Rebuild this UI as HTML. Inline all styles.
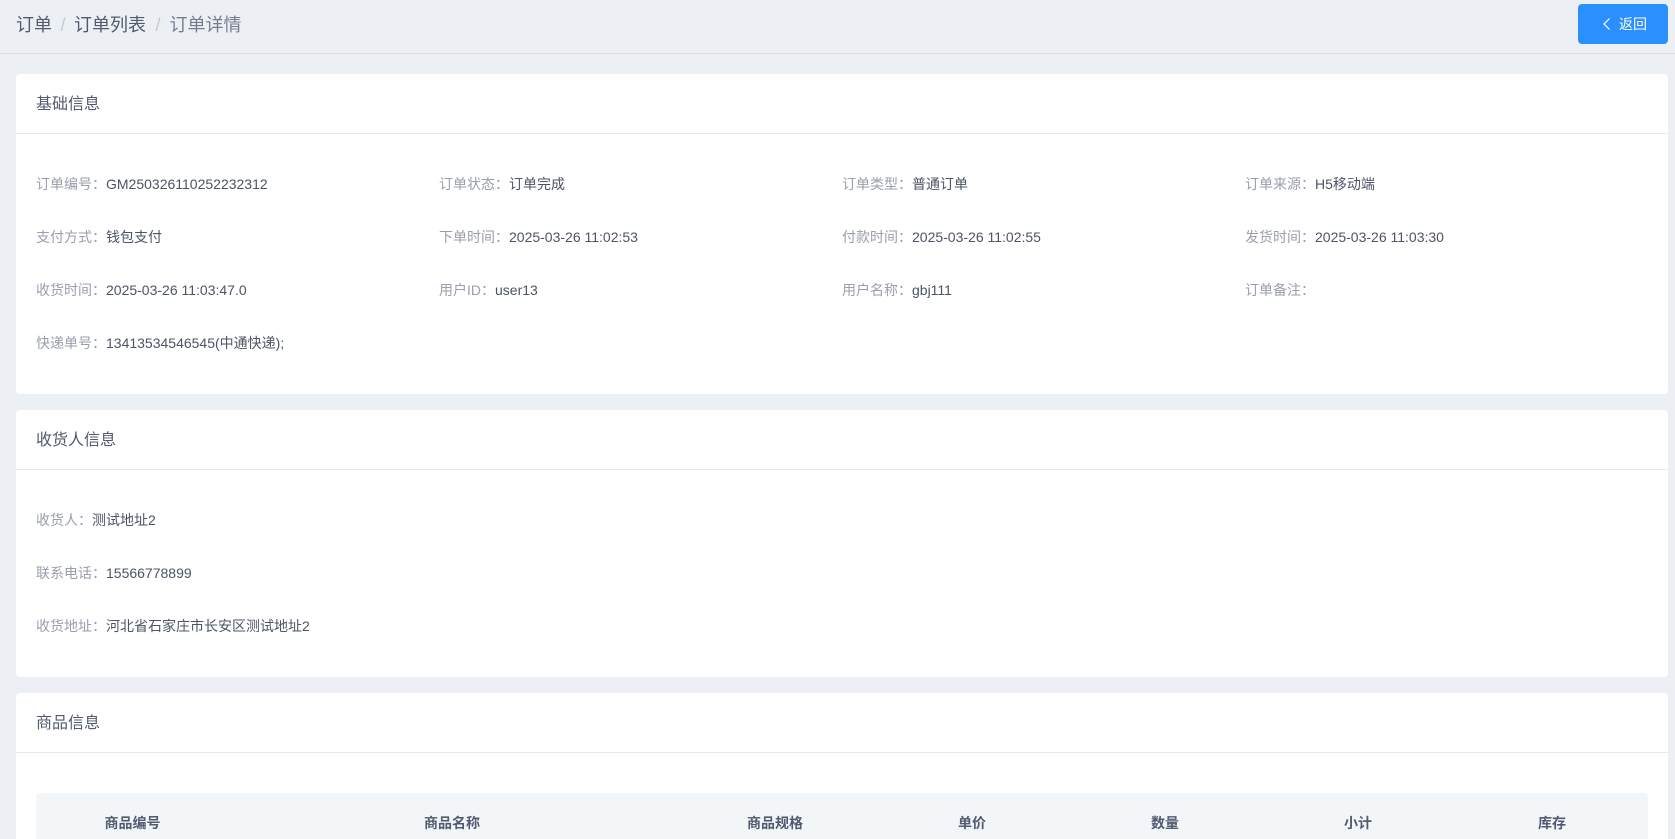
<!DOCTYPE html>
<html lang="zh-CN">
<head>
<meta charset="utf-8">
<title>订单详情</title>
<style>
html,body{margin:0;padding:0;width:1675px;height:839px;overflow:hidden;background:#ecf0f5;}
body{position:relative;font-family:"Liberation Sans","Noto Sans CJK SC",sans-serif;font-size:14px;color:#515a6e;}
.bar{position:absolute;left:0;top:0;width:1675px;height:53px;border-bottom:1px solid #d9dce8;box-sizing:content-box;}
.crumb{position:absolute;left:16px;top:11px;height:28px;line-height:28px;font-size:18px;white-space:nowrap;color:#515a6e;}
.crumb i{font-style:normal;color:#c5c8ce;padding:0 8.5px;}
.crumb i.s2{padding:0 9px 0 9.5px;}
.crumb b{font-weight:400;color:#767c8c;}
.btn{position:absolute;left:1578px;top:4px;width:90px;height:40px;background:#2b8fff;border-radius:4px;color:#fff;}
.btn svg{position:absolute;left:24px;top:13px;}
.btn span{position:absolute;left:41px;top:1px;line-height:39px;font-size:14px;white-space:nowrap;}
.card{position:absolute;left:16px;width:1652px;background:#fff;border-radius:4px;overflow:hidden;}
.card .t{position:absolute;left:20px;top:2px;height:59px;line-height:58px;font-size:16px;color:#515a6e;white-space:nowrap;}
.card .l{position:absolute;left:0;top:59px;width:1652px;height:1px;background:#e8eaec;}
.r{position:absolute;white-space:nowrap;height:20px;line-height:20px;font-size:14px;color:#4c5466;}
.r em{font-style:normal;color:#9a9eae;}
.th{position:absolute;left:36px;top:793px;width:1612px;height:60px;background:#f3f6f9;border-radius:4px 4px 0 0;}
.h{position:absolute;transform:translate(-50%,-50%);top:823px;font-weight:700;font-size:14px;line-height:20px;color:#515a6e;white-space:nowrap;}
</style>
</head>
<body>
<div class="bar"></div>
<div class="crumb">订单<i>/</i>订单列表<i class="s2">/</i><b>订单详情</b></div>
<div class="btn">
<svg width="10" height="14" viewBox="0 0 10 14"><path d="M7.5 1.5 L2 7 L7.5 12.5" fill="none" stroke="#fff" stroke-width="1.2"/></svg>
<span>返回</span>
</div>

<div class="card" style="top:74px;height:320px;">
<div class="t">基础信息</div><div class="l"></div>
</div>
<div class="r" style="left:36px;top:174px;"><em>订单编号：</em>GM250326110252232312</div>
<div class="r" style="left:439px;top:174px;"><em>订单状态：</em>订单完成</div>
<div class="r" style="left:842px;top:174px;"><em>订单类型：</em>普通订单</div>
<div class="r" style="left:1245px;top:174px;"><em>订单来源：</em>H5移动端</div>
<div class="r" style="left:36px;top:227px;"><em>支付方式：</em>钱包支付</div>
<div class="r" style="left:439px;top:227px;"><em>下单时间：</em>2025-03-26 11:02:53</div>
<div class="r" style="left:842px;top:227px;"><em>付款时间：</em>2025-03-26 11:02:55</div>
<div class="r" style="left:1245px;top:227px;"><em>发货时间：</em>2025-03-26 11:03:30</div>
<div class="r" style="left:36px;top:280px;"><em>收货时间：</em>2025-03-26 11:03:47.0</div>
<div class="r" style="left:439px;top:280px;"><em>用户ID：</em>user13</div>
<div class="r" style="left:842px;top:280px;"><em>用户名称：</em>gbj111</div>
<div class="r" style="left:1245px;top:280px;"><em>订单备注：</em></div>
<div class="r" style="left:36px;top:333px;"><em>快递单号：</em>13413534546545(中通快递);</div>

<div class="card" style="top:410px;height:267px;">
<div class="t">收货人信息</div><div class="l"></div>
</div>
<div class="r" style="left:36px;top:510px;"><em>收货人：</em>测试地址2</div>
<div class="r" style="left:36px;top:563px;"><em>联系电话：</em>15566778899</div>
<div class="r" style="left:36px;top:616px;"><em>收货地址：</em>河北省石家庄市长安区测试地址2</div>

<div class="card" style="top:693px;height:146px;border-radius:4px 4px 0 0;">
<div class="t">商品信息</div><div class="l"></div>
</div>
<div class="th"></div>
<div class="h" style="left:132.5px;">商品编号</div>
<div class="h" style="left:452px;">商品名称</div>
<div class="h" style="left:775px;">商品规格</div>
<div class="h" style="left:972px;">单价</div>
<div class="h" style="left:1165px;">数量</div>
<div class="h" style="left:1358px;">小计</div>
<div class="h" style="left:1552px;">库存</div>
</body>
</html>
